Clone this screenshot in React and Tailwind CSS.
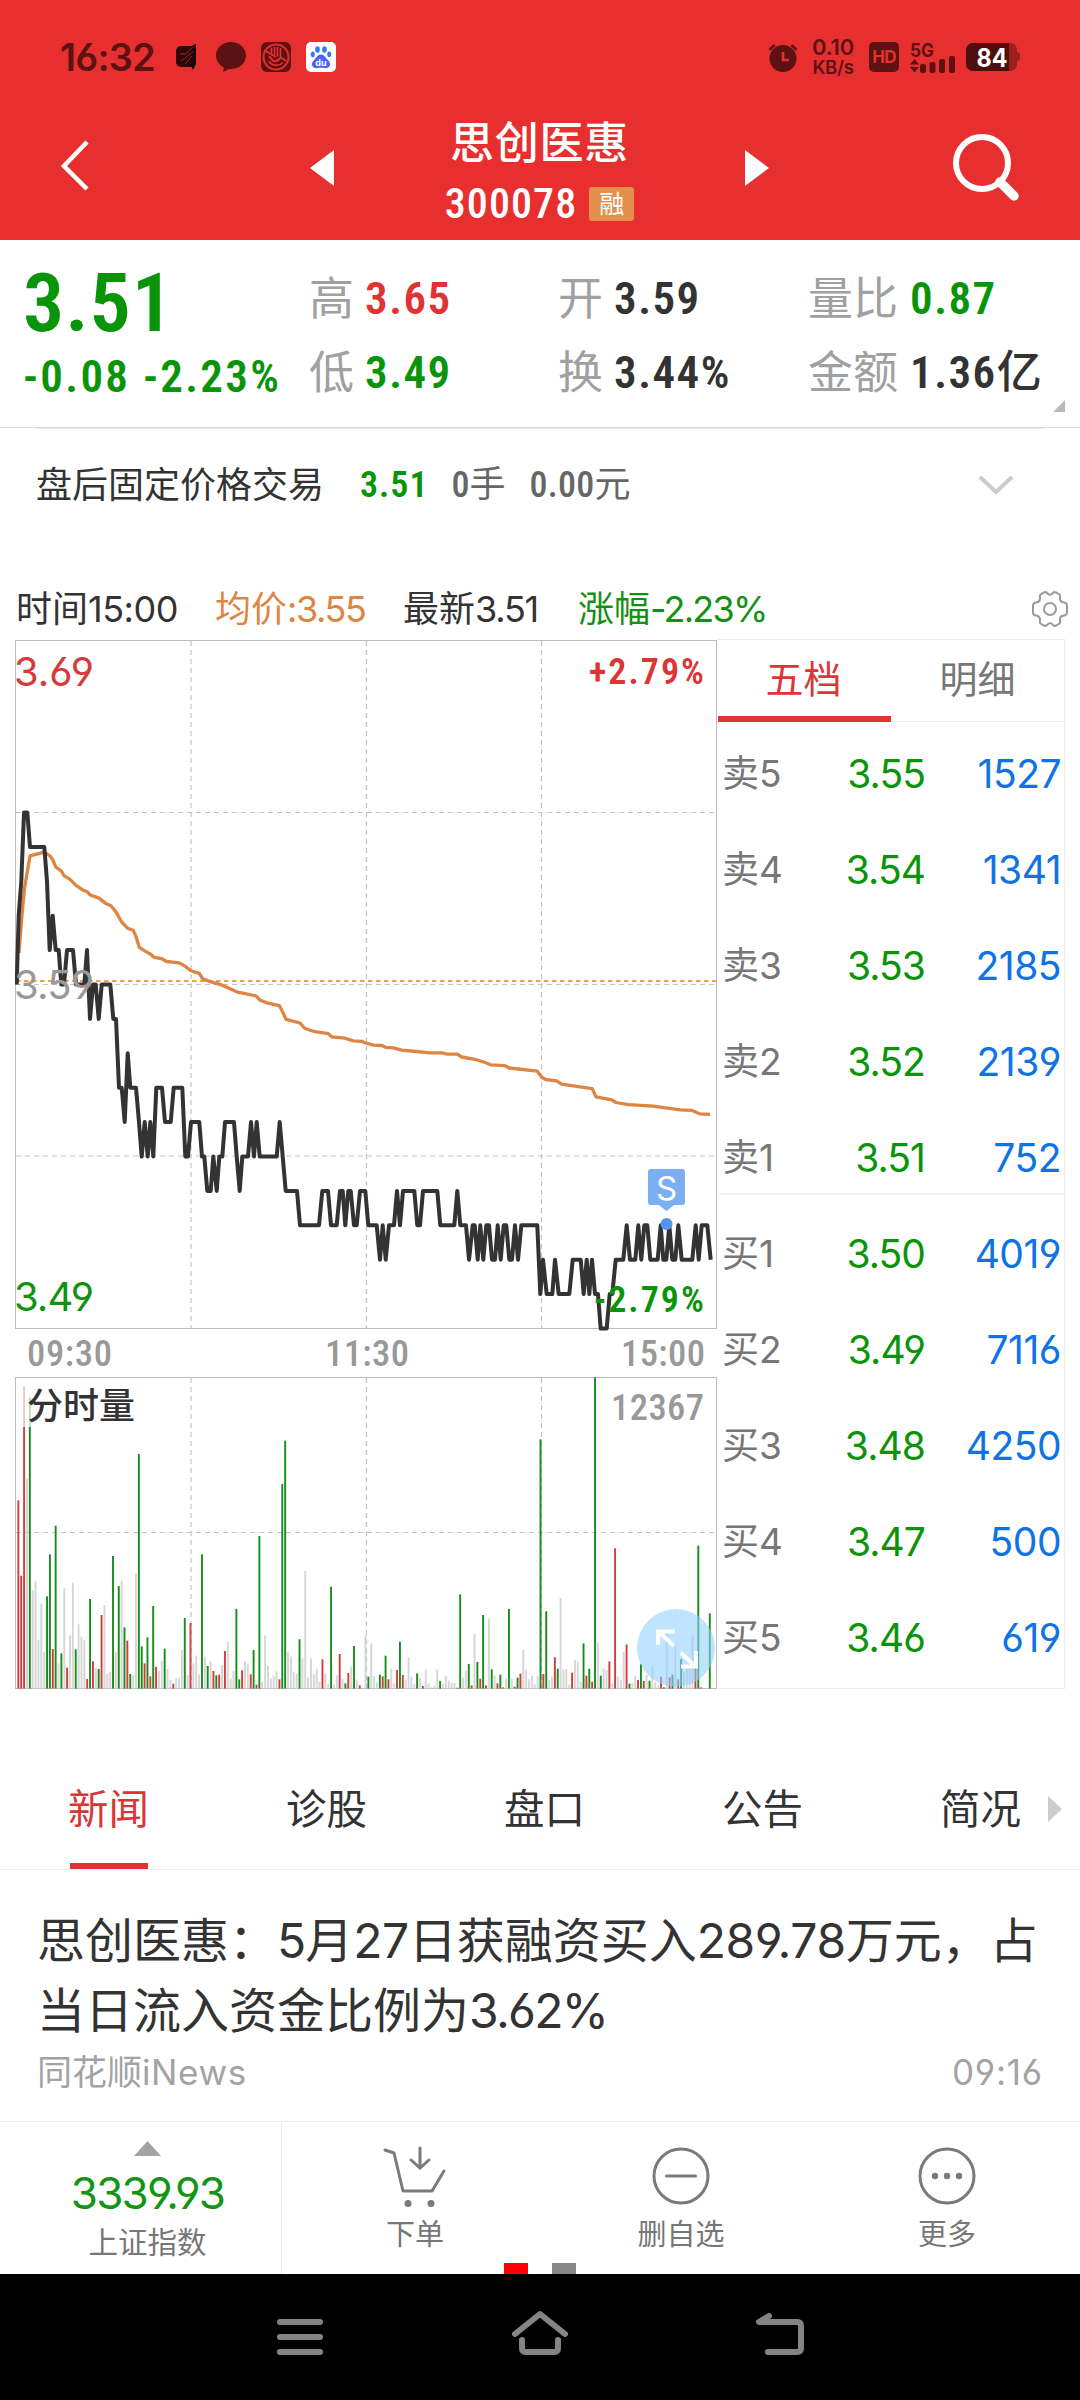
const PRICE_LINE = [
  [50, 59], [56, 61], [64, 62], [72, 64], [82, 64], [90, 63], [133, 63], [141, 62], [149, 60], [158, 61], [167, 60], [176, 60],
  [184, 59], [192, 59], [201, 60], [219, 60], [228, 59], [253, 59], [261, 60], [270, 58], [279, 59], [287, 59], [296, 58], [305, 59],
  [331, 59], [340, 58], [348, 58], [357, 56], [365, 56], [374, 55], [383, 57], [391, 56], [408, 56], [417, 55], [425, 54], [434, 55],
  [443, 54], [451, 55], [460, 54], [469, 56], [486, 56], [495, 55], [512, 55], [521, 56], [547, 56], [556, 54], [564, 54], [573, 55],
  [598, 55], [606, 54], [613, 54], [622, 53], [632, 53], [640, 54], [650, 53], [658, 54], [667, 54], [675, 55], [702, 55], [710, 54],
  [719, 53], [727, 54], [744, 54], [753, 55], [762, 54], [770, 55], [779, 54], [830, 54], [839, 55], [848, 54], [857, 53], [891, 53],
  [900, 52], [957, 52], [967, 53], [984, 53], [993, 52], [1010, 52], [1020, 53], [1028, 53], [1036, 52], [1045, 53], [1052, 53],
  [1062, 52], [1070, 52], [1080, 53], [1096, 53], [1105, 52], [1130, 52], [1140, 51], [1148, 52], [1157, 51], [1167, 52], [1182, 52],
  [1191, 53], [1200, 52], [1209, 53], [1243, 53], [1252, 52], [1260, 52], [1269, 53], [1312, 53], [1321, 52], [1363, 52], [1372, 53],
  [1381, 52], [1398, 52], [1407, 51], [1418, 52], [1424, 52], [1433, 51], [1441, 52], [1450, 51], [1459, 52], [1467, 52], [1476, 51],
  [1485, 51], [1493, 52], [1502, 51], [1511, 52], [1519, 52], [1528, 51], [1536, 51], [1545, 52], [1554, 51], [1564, 52], [1612, 52],
  [1621, 50], [1629, 51], [1640, 50], [1657, 50], [1665, 51], [1676, 50], [1708, 50], [1718, 51], [1742, 51], [1751, 50], [1760, 51],
  [1768, 50], [1776, 51], [1785, 50], [1794, 50], [1802, 49], [1820, 49], [1829, 50], [1837, 50], [1847, 51], [1870, 51], [1880, 52],
  [1890, 51], [1906, 51], [1915, 52], [1924, 51], [1933, 52], [1942, 52], [1951, 51], [1973, 51], [1982, 52], [1990, 51], [1999, 51],
  [2008, 52], [2017, 51], [2026, 51], [2035, 52], [2045, 51], [2077, 51], [2087, 52], [2096, 51], [2105, 52], [2122, 52], [2132, 51],
];

const AVG_LINE = [
  [57, 703], [66, 620], [74, 560], [90, 492], [133, 484], [150, 492], [158, 500], [167, 516], [184, 525], [192, 535], [210, 543],
  [228, 556], [250, 567], [262, 570], [270, 577], [297, 584], [318, 596], [332, 600], [348, 614], [365, 636], [383, 650], [400, 654],
  [408, 668], [418, 691], [434, 699], [452, 706], [462, 713], [485, 716], [500, 722], [538, 725], [555, 732], [573, 742], [598, 748],
  [608, 760], [640, 768], [665, 773], [710, 788], [768, 797], [780, 806], [800, 812], [838, 818], [848, 832], [858, 848], [900, 856],
  [915, 868], [945, 875], [985, 879], [995, 886], [1035, 889], [1060, 895], [1085, 896], [1099, 900], [1120, 904], [1146, 905],
  [1158, 909], [1180, 910], [1205, 915], [1250, 918], [1290, 921], [1325, 921], [1342, 924], [1372, 924], [1385, 930], [1425, 935],
  [1455, 942], [1472, 947], [1515, 949], [1528, 954], [1612, 961], [1625, 974], [1637, 979], [1670, 982], [1685, 989], [1730, 994],
  [1777, 999], [1788, 1017], [1820, 1021], [1837, 1024], [1848, 1029], [1885, 1034], [1960, 1037], [2040, 1045], [2075, 1046],
  [2100, 1054], [2130, 1055],
];

// one entry per minute: colour letter (r up, g down, a flat) and the top of the bar
const VOLUME = `r541 r767 r199 a475 g232 a811 a784 a960 a850 a997 g829 g703 r987 g617 a1030 g1000 a805 r1043 a946 a788 g988 a913 a950
a961 r1077 g837 r1024 a1044 g1047 r885 a855 a1061 a1055 g708 a996 g798 a782 g922 r962 g1062 a1065 a761 g402 g979 r1030 g952 r1069 g858
r1041 a1053 a1023 g986 a1047 a1080 r1091 a1075 a1075 a990 g894 a1065 r909 a1030 a1007 a1064 g703 a1010 g1038 a1025 r1053 g1066 r1064
a1035 r993 a966 a1076 a1053 g867 g1078 r1051 a1024 a1030 r1063 g990 r1094 g648 a1086 a946 a1037 a1075 a1067 a1053 r1078 g492 g362 a997
a1010 a1055 a1062 g958 a1015 a753 a1072 a1015 a1063 a1046 a1086 r1018 a1060 a1092 g800 a1094 a1066 r1002 a1077 g1090 r1059 a1040 g978
a1078 r1096 a1105 a945 g1070 a970 a1068 a1087 g1064 r1069 g1007 r1078 a1046 a1090 r1050 g965 r1065 a1080 a1012 a1070 a1091 g1060 a1074
r1098 a1049 a1090 a1102 a1098 a1048 g1083 a1093 a1068 a1082 a1088 a1089 r1103 g823 a1072 a1053 g1032 r1096 a942 g1026 r1076 g885 r1096
a895 g1048 a1066 r1090 g1064 r1102 a1075 g867 a1075 r1100 g1073 r1061 a990 a1049 a1078 a1068 a1093 a1068 g358 r1062 g874 a1080 a1070
r1012 g1046 a834 a1049 a1047 a1094 r1058 a1020 a1025 a1086 g970 r1067 g1046 r1085 g172 a968 g1067 a1045 a1050 r1024 a1090 r685 a1070
a1080 a996 r973 g1091 a1090 a1068 r1080 g1033 r1083 a1064 g1082 a1035 a1087 a1095 r1070 g1102 a940 r1072 g1064 a970 r1078 g1017 a1058
a1045 a1045 a945 r1044 g677 r1102 a1106 a1106 g880`.split(/\s+/);

const BAR_COLORS = { r: "#d23c3c", g: "#178c1c", a: "#d6d6d6" };

const ORDERS = [
  ["卖5", "3.55", "1527"],
  ["卖4", "3.54", "1341"],
  ["卖3", "3.53", "2185"],
  ["卖2", "3.52", "2139"],
  ["卖1", "3.51", "752"],
  ["买1", "3.50", "4019"],
  ["买2", "3.49", "7116"],
  ["买3", "3.48", "4250"],
  ["买4", "3.47", "500"],
  ["买5", "3.46", "619"],
];

const TABS = ["新闻", "诊股", "盘口", "公告", "简况"];

const DIN = "font-['Roboto_Condensed','Noto_Sans_CJK_SC',sans-serif]";

function StatusBar() {
  return (<div className="flex h-[114px] items-center pl-[60px] pr-[60px] text-[#5c1212]">
    <span className="w-[116px] text-[38px] leading-[50px] font-semibold tracking-[-0.8px]">16:32</span>
    <svg className="w-[22px] h-[26px]" viewBox="0 0 22 26">
      <rect x="0" y="2" width="20" height="21" rx="5" fill="#2d0808" />
      <path d="M15 2 L20 0 V20 L17 26 L14 20Z" fill="#1d0505" />
      <path d="M4 10h5l8-7M5 17l5-4 7-5M9 20l7-8" fill="none" stroke="#a02020" strokeWidth="1" />
    </svg>
    <svg className="ml-[18px] w-[30px] h-[30px]" viewBox="0 0 30 30">
      <path d="M15 0C6.500 0 0 6 0 13.500c0 5 3 9.500 8 12L7 30l6-3c9 .8 17-5 17-13.500C30 6 23.500 0 15 0z" fill="currentColor" />
    </svg>
    <svg className="ml-[15px] w-[30px] h-[30px]" viewBox="0 0 30 30">
      <rect width="30" height="30" rx="6" fill="currentColor" />
      <circle cx="15" cy="15" r="12.500" fill="none" stroke="#e72f2f" strokeWidth="2" />
      <path d="M4.500 9L15 15" fill="none" stroke="#e72f2f" strokeWidth="2" />
      <path d="M10.500 5.500v6M13.500 5v8M16.500 5v9.500M19.500 6v9" fill="none" stroke="#e72f2f" strokeWidth="1.600" />
      <path d="M7.500 14.500c3 0 3 3.500 5 4.500 3 1.500 5.500-1.500 7.500-3.500l5 3.500" fill="none" stroke="#e72f2f" strokeWidth="2" />
      <path d="M8 19c3 5.500 10 5.500 14 1.500" fill="none" stroke="#e72f2f" strokeWidth="1.600" />
    </svg>
    <svg className="ml-[15px] w-[30px] h-[30px]" viewBox="0 0 30 30">
      <rect width="30" height="30" rx="5" fill="#fff" />
      <g fill="#2f7cf0">
        <ellipse cx="11.500" cy="7.500" rx="2.300" ry="3.200" />
        <ellipse cx="18.500" cy="7.500" rx="2.300" ry="3.200" />
        <ellipse cx="6.800" cy="12.300" rx="2" ry="2.900" />
        <ellipse cx="23.200" cy="12.300" rx="2" ry="2.900" />
        <path d="M15 12.500c3 0 4.500 3 6.500 5s3 3.500 2.300 6c-.8 2.500-3.500 3-5.300 2.600-2.400-.5-4.600-.5-7 0-1.800.4-4.500-.1-5.300-2.600-.7-2.500.3-4 2.300-6s3.500-5 6.500-5z" fill="#4a63f2" />
      </g>
      <text x="15" y="24" textAnchor="middle" fontSize="9" fontWeight="700" fill="#fff">du</text>
    </svg>

    <svg className="ml-auto w-[30px] h-[30px]" viewBox="0 0 30 30">
      <circle cx="15" cy="16.500" r="13.500" fill="currentColor" />
      <path d="M1.500 8l5-5M28.500 8l-5-5" stroke="currentColor" strokeWidth="2.600" />
      <path d="M15 10v8h6" fill="none" stroke="#e72f2f" strokeWidth="2.600" />
    </svg>
    <div className="ml-[12px] flex w-[46px] flex-col items-center">
      <span className="text-[22px] leading-[20px] font-semibold tracking-[-0.200px]">0.10</span>
      <span className="text-[18.500px] leading-[20px] font-semibold tracking-[-0.300px]">KB/s</span>
    </div>
    <div className="ml-[13px] flex h-[30px] w-[30px] items-center justify-center rounded-[5px] bg-[#5c1212] text-[17px] leading-[20px] font-bold tracking-[-0.800px] text-[#e72f2f]">HD</div>
    <svg className="ml-[11px] w-[46px] h-[36px]" viewBox="0 -1 46 36" fill="currentColor">
      <text x="0" y="16.500" fontSize="18.500" fontWeight="700" textLength="24" lengthAdjust="spacingAndGlyphs">5G</text>
      <path d="M0 24.500l4.500-5.500 4.500 5.500zM0 27h9l-4.500 5.500z" />
      <rect x="10" y="24" width="6" height="9" rx="2" />
      <rect x="19.500" y="22" width="6" height="11" rx="2" />
      <rect x="29" y="19" width="6" height="14" rx="2" />
      <rect x="39" y="16" width="6" height="17" rx="2" />
    </svg>
    <svg className="ml-[10px] w-[54px] h-[28px]" viewBox="0 0 54 28">
      <rect x="44" y="9" width="10" height="9" rx="3" fill="#9c1f1f" />
      <rect x="0" y="0" width="51" height="28" rx="7" fill="#9c1f1f" />
      <path d="M7 0h36v28H7a7 7 0 0 1-7-7V7a7 7 0 0 1 7-7z" fill="#4d0e0e" />
      <text x="10.500" y="23.500" fontSize="25" fontWeight="700" fill="#fff" textLength="31" lengthAdjust="spacingAndGlyphs">84</text>
    </svg>
  </div>);
}

function NavBar() {
  return (<div className="flex h-[126px] text-white">
    <svg className="ml-[58px] mt-[24px] w-[36px] h-[56px]" viewBox="0 0 36 56">
      <path d="M29 4 L6 28 L29 51" fill="none" stroke="currentColor" strokeWidth="4.500" />
    </svg>
    <svg className="ml-[216px] mt-[36px] w-[24px] h-[36px]" viewBox="0 0 24 36"><path d="M24 0v36L0 18z" fill="currentColor" /></svg>
    <div className="flex w-[411px] flex-col items-center pt-[4px]">
      <h1 className="text-[44px] leading-[50px] font-medium tracking-[0.800px]">思创医惠</h1>
      <div className="mt-[11px] flex h-[50px] items-center">
        <span className={`${DIN} text-[42px] leading-[50px] font-medium tracking-[1.100px]`}>300078</span>
        <span className="ml-[12px] flex h-[34px] w-[45px] items-center justify-center rounded-[3px] bg-[#e38e4a] text-[25px] leading-[34px]">融</span>
      </div>
    </div>
    <svg className="mt-[36px] w-[24px] h-[36px]" viewBox="0 0 24 36"><path d="M0 0v36L24 18z" fill="currentColor" /></svg>
    <svg className="ml-[180px] mt-[20px] w-[74px] h-[74px]" viewBox="0 0 74 74" fill="none" stroke="currentColor">
      <circle cx="33" cy="29" r="26" strokeWidth="6" />
      <path d="M51 48 L65 62" strokeWidth="9.500" strokeLinecap="round" />
    </svg>
  </div>);
}

function Stat({label, value, color, gap}) {
  return (<div className="flex h-[74px] items-center text-[45px] leading-[60px]">
    <span className="text-[#a0a0a0]">{label}</span>
    <span className={`${DIN} ${gap} ${color} font-semibold tracking-[1.500px]`}>{value}</span>
  </div>);
}

function Quote() {
  return (<div className="relative flex h-[188px] border-b border-[#dcdcdc] pt-[22px]">
    <div className={`${DIN} w-[309px] pl-[23px] font-semibold text-[#099409]`}>
      <div className="mt-[4px] text-[82px] leading-[74px] tracking-[1px]">3.51</div>
      <div className="text-[45px] leading-[74px] tracking-[2.300px] whitespace-nowrap">-0.08 -2.23%</div>
    </div>
    <div className="w-[249px]">
      <Stat label="高" value="3.65" color="text-[#e03333]" gap="ml-[11px]" />
      <Stat label="低" value="3.49" color="text-[#099409]" gap="ml-[11px]" />
    </div>
    <div className="w-[250px]">
      <Stat label="开" value="3.59" color="text-[#333333]" gap="ml-[11px]" />
      <Stat label="换" value="3.44%" color="text-[#333333]" gap="ml-[11px]" />
    </div>
    <div>
      <Stat label="量比" value="0.87" color="text-[#099409]" gap="ml-[12px]" />
      <Stat label="金额" value={<>1.36<span className="font-medium tracking-normal">亿</span></>} color="text-[#333333]" gap="ml-[12px]" />
    </div>
    <svg className="absolute right-[15px] bottom-[15px] w-[12px] h-[12px]" viewBox="0 0 12 12"><path d="M12 0v12H0z" fill="#bbb" /></svg>
  </div>);
}

function AfterHours() {
  return (<div className="mx-[36px] flex h-[112px] items-center border-t border-[#e8e8e8] text-[36px] leading-[50px] text-[#333333]">
    <span>盘后固定价格交易</span>
    <span className={`${DIN} ml-[36px] font-semibold tracking-[1px] text-[#099409]`}>3.51</span>
    <span className={`${DIN} ml-[23px] font-medium text-[#666666]`}>0<span className="font-normal">手</span></span>
    <span className={`${DIN} ml-[24px] font-medium tracking-[0.200px] text-[#666666]`}>0.00<span className="font-normal">元</span></span>
    <svg className="ml-auto mr-[30px] w-[36px] h-[22px]" viewBox="0 0 36 22"><path d="M2 3l16 15 16-15" fill="none" stroke="#ccc" strokeWidth="4" /></svg>
  </div>);
}

function InfoRow() {
  return (<div className="mt-[38px] flex h-[61px] items-center pl-[16px] text-[36px] leading-[50px] text-[#333333]">
    <span className="w-[199px]">时间<span className="tracking-[-0.500px]">15:00</span></span>
    <span className="w-[188px] text-[#de8544]">均价<span className="tracking-[-1.400px]">:3.55</span></span>
    <span className="w-[175px]">最新<span className="tracking-[-1.200px]">3.51</span></span>
    <span className="text-[#149014]">涨幅<span className="tracking-[-1.800px]">-2.23%</span></span>
    <svg className="ml-auto mr-[11px] w-[38px] h-[38px]" viewBox="0 0 38 38" fill="none" stroke="#9a9a9a" strokeWidth="2">
      <path d="M13 2.500q2-1 3 .5 3 3.500 6 0 1-1.500 3-.5l3.500 2q1 1 .5 3-.5 4.500 4 5 2.500.3 3 2.500v8q-.5 2.200-3 2.500-4.500.5-4 5 .5 2-.5 3l-3.500 2q-2 1-3-.5-3-3.500-6 0-1 1.500-3 .5l-3.500-2q-1-1-.5-3 .5-4.500-4-5-2.500-.3-3-2.500v-8q.5-2.200 3-2.500 4.500-.5 4-5-.5-2 .5-3z" />
      <circle cx="19" cy="19" r="6" />
    </svg>
  </div>);
}

function Chart() {
  const price = PRICE_LINE.map(([x, c]) => `${(x / 3).toFixed(1)},${(984.5 - (c - 59) * 34.4).toFixed(1)}`).join(" ");
  const avg = AVG_LINE.map(([x, y]) => `${(x / 3).toFixed(1)},${(630 + y / 2.178).toFixed(1)}`).join(" ");

  return (<svg className="w-[703px] h-[1051px] shrink-0" viewBox="15 639 703 1051">
    <g fill="none" stroke="#c4c4c4" strokeWidth="1.200" strokeDasharray="5 4">
      <path d="M191 641V1328M366.500 641V1328M541.500 641V1328" />
      <path d="M16 812.500H716M16 984.500H716M16 1156H716" />
      <path d="M191 1378V1688M366.500 1378V1688M541.500 1378V1688M16 1532.500H716" />
    </g>
    <path d="M16 981H716" stroke="#e9a640" strokeWidth="2" strokeDasharray="4.500 3.500" />
    <g fill="none" stroke="#bcbcbc">
      <rect x="15.500" y="640.500" width="701" height="688" />
      <rect x="15.500" y="1377.500" width="701" height="311" />
    </g>

    <polyline points={avg} fill="none" stroke="#de8544" strokeWidth="3.300" strokeLinejoin="round" />
    <polyline points={price} fill="none" stroke="#333" strokeWidth="4" strokeLinejoin="round" />

    <g fontSize="40" fontFamily="Inter">
      <text x="14" y="686" fill="#d63a3a" textLength="80">3.69</text>
      <text x="14" y="999" fill="#999" textLength="80">3.59</text>
      <text x="14" y="1311" fill="#119211" textLength="80">3.49</text>
    </g>
    <g fontSize="36" fontFamily="Roboto Condensed" fontWeight="600">
      <text x="589" y="684" fill="#dd3535" textLength="115">+2.79%</text>
      <text x="594" y="1312" fill="#099409" textLength="110">-2.79%</text>
    </g>
    <g fontSize="36.500" fontFamily="Roboto Condensed" fontWeight="500" fill="#999">
      <text x="27" y="1366" textLength="85">09:30</text>
      <text x="325" y="1366" textLength="84">11:30</text>
      <text x="621" y="1366" textLength="84">15:00</text>
    </g>

    <path d="M651 1169h31a3 3 0 0 1 3 3v30a3 3 0 0 1-3 3h-8l-7.500 6-7.500-6h-8a3 3 0 0 1-3-3v-30a3 3 0 0 1 3-3z" fill="#7baff2" />
    <text x="666.500" y="1200" fontSize="33" textAnchor="middle" fill="#fff">S</text>
    <circle cx="666.500" cy="1224" r="6" fill="#5596ec" />

    {VOLUME.map((bar, i) => {
      const top = 1320 + Number(bar.slice(1)) / 3;
      return <rect key={i} x={17.4 + i * 2.869} y={top} width="1.900" height={1688.5 - top} fill={BAR_COLORS[bar[0]]} />;
    })}
    <rect x="17" y="1379" width="120" height="48" fill="#fff" opacity="0.700" />
    <text x="27" y="1419" fontSize="36" fontWeight="500" fill="#333">分时量</text>
    <text x="611" y="1420" fontSize="36.500" fontFamily="Roboto Condensed" fontWeight="500" fill="#999" textLength="93">12367</text>

    <circle cx="676" cy="1648" r="39" fill="#8fd0ff" opacity="0.580" />
    <path d="M674 1646l-15-14M658 1645v-13.500h17M681 1653l14 13M696 1651v15.500h-15" fill="none" stroke="#fff" strokeWidth="4" />
  </svg>);
}

function OrderBook() {
  return (<div className="relative h-[1050px] w-[347px] border-t border-r border-b border-[#ececec]">
    <div className="flex h-[82px] text-[38px] leading-[50px]">
      <div className="flex w-[173px] items-center justify-center border-b-[6px] border-[#e03333] pt-[2px] pr-[2px] text-[#e03333]">五档</div>
      <div className="flex flex-1 items-center justify-center border-b border-[#ececec] text-[#777777] pb-[4px]">明细</div>
    </div>
    <div className="pt-[4px]">
      {ORDERS.map(([label, price, amount]) => (
        <div key={label} className="flex h-[96px] items-center pr-[3px] pl-[4px] text-[39px] leading-[50px] tracking-[-0.900px]">
          <span className="w-[70px] text-[37px] tracking-normal text-[#777777]">{label}</span>
          <span className="w-[133px] text-right text-[#099409]">{price}</span>
          <span className="flex-1 text-right tracking-[-0.500px] text-[#0f73e6]">{amount}</span>
        </div>
      ))}
    </div>
    <div className="absolute top-[553px] right-0 left-[1px] h-[2px] bg-[#f3f3f3]"></div>
  </div>);
}

function News() {
  return (<>
    <div className="mt-[60px] flex h-[120px] items-stretch border-b border-[#ececec] pl-[68px] text-[40.500px] leading-[120px] text-[#333333]">
      {TABS.map((tab, i) => (
        <div key={tab} className={i === 0 ? "relative w-[218px] text-[#d93636]" : i === 4 ? "w-[108px]" : "w-[218px]"}>
          {tab}
          {i === 0 && <div className="absolute bottom-0 left-[2px] h-[6px] w-[78px] bg-[#e03333]"></div>}
        </div>
      ))}
      <svg className="mt-[46px] w-[14px] h-[26px]" viewBox="0 0 14 26"><path d="M0 0v26L14 13z" fill="#ccc" /></svg>
    </div>
    <div className="h-[251px] px-[37px] pt-[36px]">
      <h2 className="text-[48px] leading-[70px] text-[#333333]">
        思创医惠：<span className="tracking-[-1px]">5</span>月<span className="tracking-[-0.500px]">27</span>日获融资买入<span className="tracking-[-0.400px]">289.78</span>万元，占<br />
        当日流入资金比例为<span className="tracking-[-1.700px]">3.62%</span>
      </h2>
      <div className="flex justify-between text-[35px] leading-[52px] text-[#a3a3a3]">
        <span>同花顺<span className="tracking-[0.600px]">iNews</span></span>
        <span className="tracking-[0.800px]">09:16</span>
      </div>
    </div>
  </>);
}

function Action({label, children}) {
  return (<div className="flex flex-1 flex-col items-center pt-[22px]">
    <svg className="w-[64px] h-[64px]" viewBox="0 0 64 64" fill="none" stroke="#7a7a7a" strokeWidth="3" strokeLinecap="round">{children}</svg>
    <span className="mt-[7px] text-[29px] leading-[40px] text-[#777777]">{label}</span>
  </div>);
}

function BottomBar() {
  return (<div className="relative flex h-[153px] overflow-hidden border-t border-[#ececec]">
    <div className="flex w-[282px] flex-col items-center border-r border-[#ececec] pt-[19px] pl-[14px]">
      <svg className="w-[27px] h-[15px]" viewBox="0 0 27 15"><path d="M13.500 0L27 15H0z" fill="#a3a3a3" /></svg>
      <span className="mt-[12px] text-[44px] leading-[50px] tracking-[-1.800px] text-[#149414]">3339.93</span>
      <span className="mt-[4px] text-[29.500px] leading-[40px] text-[#777777]">上证指数</span>
    </div>
    <Action label="下单">
      <path d="M2 6l9 3 9 38h29l12-20" strokeLinejoin="round" />
      <path d="M37 4v19M28 16l9 8 9-8" />
      <circle cx="25" cy="59.500" r="3.500" fill="#7a7a7a" stroke="none" />
      <circle cx="48" cy="59.500" r="3.500" fill="#7a7a7a" stroke="none" />
    </Action>
    <Action label="删自选">
      <circle cx="32" cy="32" r="27" />
      <path d="M17.500 32h29" />
    </Action>
    <Action label="更多">
      <circle cx="32" cy="32" r="27" />
      <g fill="#7a7a7a" stroke="none">
        <circle cx="20" cy="32" r="3.200" />
        <circle cx="32" cy="32" r="3.200" />
        <circle cx="44" cy="32" r="3.200" />
      </g>
    </Action>
    <div className="absolute bottom-0 left-[504px] flex gap-[24px]">
      <div className="h-[11px] w-[24px] bg-[#ff0000]"></div>
      <div className="h-[11px] w-[24px] bg-[#888888]"></div>
    </div>
  </div>);
}

function SystemNav() {
  return (<div className="flex h-[126px] justify-center gap-[184px] bg-black pt-[35px]">
    <svg className="w-[56px] h-[50px]" viewBox="272 2309 56 50" stroke="#848484" strokeWidth="6" strokeLinecap="round">
      <path d="M280 2322h40M280 2337h40M280 2352h40" />
    </svg>
    <svg className="w-[56px] h-[50px]" viewBox="512 2309 56 50" fill="none" stroke="#848484" strokeWidth="6" strokeLinecap="round" strokeLinejoin="round">
      <path d="M515 2334l25-20 25 20M522 2340v8q0 4 4 4h28q4 0 4-4v-8" />
    </svg>
    <svg className="w-[56px] h-[50px]" viewBox="752 2309 56 50" fill="none" stroke="#848484" strokeWidth="6" strokeLinecap="round" strokeLinejoin="round">
      <path d="M769 2316l-10 6h38q4 0 4 4v22q0 4-4 4h-29" />
    </svg>
  </div>);
}

export default function App() {
  return (<div className="h-[2400px] w-[1080px] overflow-hidden bg-white font-['Inter','Noto_Sans_CJK_SC',sans-serif] [font-feature-settings:'cv03','cv04']">
    <div className="h-[240px] bg-[#e72f2f]">
      <StatusBar />
      <NavBar />
    </div>
    <Quote />
    <AfterHours />
    <InfoRow />
    <div className="flex pl-[15px]">
      <Chart />
      <OrderBook />
    </div>
    <News />
    <BottomBar />
    <SystemNav />
  </div>);
}
